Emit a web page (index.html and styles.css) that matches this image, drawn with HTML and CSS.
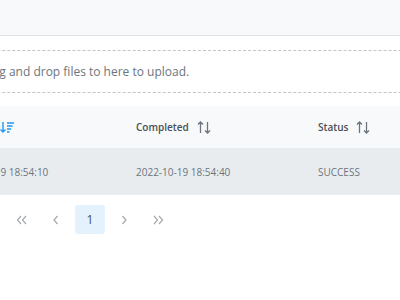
FILE: index.html
```html
<!DOCTYPE html>
<html lang="en">
<head>
    <meta charset="UTF-8">
    <meta name="viewport" content="width=device-width, initial-scale=1.0">
    <title>Uploads</title>
    <link rel="stylesheet" href="styles.css">
</head>
<body>
    <div class="page">
        <div class="upload">
            <div class="upload-bar"></div>
            <div class="upload-content">
                <div class="drop-zone">Drag and drop files to here to upload.</div>
            </div>
        </div>

        <table class="jobs">
            <thead>
                <tr>
                    <th>
                        <span class="th-inner">Created
                            <svg class="sort active" width="14" height="12" viewBox="0 0 14 12">
                                <path d="M3 1v10M0.5 8.5L3 11l2.5-2.5" fill="none" stroke="currentColor" stroke-width="1.4"/>
                                <path d="M7 2h7M7 5h5.5M7 8h4M7 11h2.5" fill="none" stroke="currentColor" stroke-width="1.4"/>
                            </svg>
                        </span>
                    </th>
                    <th>
                        <span class="th-inner">Completed
                            <svg class="sort" width="14" height="13" viewBox="0 0 14 13">
                                <path d="M3.5 12V1M1 3.5L3.5 1 6 3.5M10.5 1v11M8 9.5l2.5 2.5 2.5-2.5" fill="none" stroke="currentColor" stroke-width="1.3"/>
                            </svg>
                        </span>
                    </th>
                    <th>
                        <span class="th-inner">Status
                            <svg class="sort" width="14" height="13" viewBox="0 0 14 13">
                                <path d="M3.5 12V1M1 3.5L3.5 1 6 3.5M10.5 1v11M8 9.5l2.5 2.5 2.5-2.5" fill="none" stroke="currentColor" stroke-width="1.3"/>
                            </svg>
                        </span>
                    </th>
                </tr>
            </thead>
            <tbody>
                <tr>
                    <td>2022-10-19 18:54:10</td>
                    <td>2022-10-19 18:54:40</td>
                    <td>SUCCESS</td>
                </tr>
            </tbody>
        </table>

        <div class="paginator">
            <button class="page-btn">
                <svg width="12" height="10" viewBox="0 0 12 10"><path d="M5 1L1.5 5 5 9M10 1L6.5 5 10 9" fill="none" stroke="currentColor" stroke-width="1.2"/></svg>
            </button>
            <button class="page-btn">
                <svg width="6" height="10" viewBox="0 0 6 10"><path d="M4.5 1L1 5l3.5 4" fill="none" stroke="currentColor" stroke-width="1.2"/></svg>
            </button>
            <button class="page-btn current">1</button>
            <button class="page-btn">
                <svg width="6" height="10" viewBox="0 0 6 10"><path d="M1.5 1L5 5 1.5 9" fill="none" stroke="currentColor" stroke-width="1.2"/></svg>
            </button>
            <button class="page-btn">
                <svg width="12" height="10" viewBox="0 0 12 10"><path d="M2 1l3.5 4L2 9M7 1l3.5 4L7 9" fill="none" stroke="currentColor" stroke-width="1.2"/></svg>
            </button>
        </div>
    </div>
</body>
</html>
```

FILE: styles.css
```css
*{
    padding: 0;margin: 0;
    box-sizing: border-box;
}
body{
    font-family: "Open Sans", sans-serif;
    background: white;
    overflow: hidden;
}
.page{
    width: 560px;
    margin-left: -58px;
}
.upload-bar{
    height: 36px;
    background-color: #f8f9fa;
    border-bottom: 1px solid #dee2e6;
}
.upload-content{
    padding: 14px 0 13px;
}
.drop-zone{
    height: 43px;
    border-top: 1px dashed #c4c4c4;
    border-bottom: 1px dashed #c4c4c4;
    padding-left: 37px;
    display: flex;
    align-items: center;
    font-size: 12px;
    color: #6c757d;
}

table.jobs{
    border-collapse: collapse;
    width: 546px;
}
.jobs th, .jobs td{
    width: 182px;
    text-align: left;
    padding: 0 12px;
}
.jobs th{
    height: 42px;
    background-color: #f8f9fa;
    color: #495057;
    font-size: 10px;
    font-weight: 600;
}
.th-inner{
    display: flex;
    align-items: center;
    gap: 8px;
}
.sort{
    color: #6c757d;
}
.sort.active{
    color: #2196f3;
}
.jobs td{
    height: 47px;
    background-color: #e9ecef;
    color: #6c757d;
    font-size: 10px;
}

.paginator{
    display: flex;
    gap: 4px;
    padding: 10px 0 0 65px;
}
.page-btn{
    width: 30px;
    height: 29px;
    border: none;
    border-radius: 3px;
    background: none;
    color: #a3a9ae;
    font-family: "Open Sans", sans-serif;
    font-size: 12px;
    display: flex;
    align-items: center;
    justify-content: center;
}
.page-btn.current{
    background-color: #e3f2fd;
    color: #495057;
}
```
